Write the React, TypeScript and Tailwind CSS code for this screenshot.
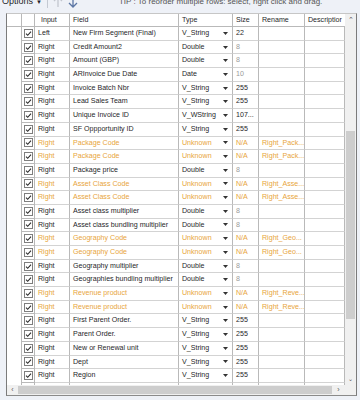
import { memo } from 'react';

type Row = {
  input: string;
  field: string;
  type: string;
  size: string;
  rename?: string;
  warn?: boolean;
  fixed?: boolean;
};

const rows: Row[] = [
  { input: 'Left', field: 'New Firm Segment (Final)', type: 'V_String', size: '22' },
  { input: 'Right', field: 'Credit Amount2', type: 'Double', size: '8', fixed: true },
  { input: 'Right', field: 'Amount (GBP)', type: 'Double', size: '8', fixed: true },
  { input: 'Right', field: 'ARInvoice Due Date', type: 'Date', size: '10', fixed: true },
  { input: 'Right', field: 'Invoice Batch Nbr', type: 'V_String', size: '255' },
  { input: 'Right', field: 'Lead Sales Team', type: 'V_String', size: '255' },
  { input: 'Right', field: 'Unique Invoice ID', type: 'V_WString', size: '107...' },
  { input: 'Right', field: 'SF Oppportunity ID', type: 'V_String', size: '255' },
  { input: 'Right', field: 'Package Code', type: 'Unknown', size: 'N/A', rename: 'Right_Pack...', warn: true },
  { input: 'Right', field: 'Package Code', type: 'Unknown', size: 'N/A', rename: 'Right_Pack...', warn: true },
  { input: 'Right', field: 'Package price', type: 'Double', size: '8', fixed: true },
  { input: 'Right', field: 'Asset Class Code', type: 'Unknown', size: 'N/A', rename: 'Right_Asse...', warn: true },
  { input: 'Right', field: 'Asset Class Code', type: 'Unknown', size: 'N/A', rename: 'Right_Asse...', warn: true },
  { input: 'Right', field: 'Asset class multiplier', type: 'Double', size: '8', fixed: true },
  { input: 'Right', field: 'Asset class bundling multiplier', type: 'Double', size: '8', fixed: true },
  { input: 'Right', field: 'Geography Code', type: 'Unknown', size: 'N/A', rename: 'Right_Geo...', warn: true },
  { input: 'Right', field: 'Geography Code', type: 'Unknown', size: 'N/A', rename: 'Right_Geo...', warn: true },
  { input: 'Right', field: 'Geography multiplier', type: 'Double', size: '8', fixed: true },
  { input: 'Right', field: 'Geographies bundling multiplier', type: 'Double', size: '8', fixed: true },
  { input: 'Right', field: 'Revenue product', type: 'Unknown', size: 'N/A', rename: 'Right_Reve...', warn: true },
  { input: 'Right', field: 'Revenue product', type: 'Unknown', size: 'N/A', rename: 'Right_Reve...', warn: true },
  { input: 'Right', field: 'First Parent Order.', type: 'V_String', size: '255' },
  { input: 'Right', field: 'Parent Order.', type: 'V_String', size: '255' },
  { input: 'Right', field: 'New or Renewal unit', type: 'V_String', size: '255' },
  { input: 'Right', field: 'Dept', type: 'V_String', size: '255' },
  { input: 'Right', field: 'Region', type: 'V_String', size: '255' },
  // only a sliver of the next row shows below the last one
  { input: '', field: '', type: '', size: '' },
];

const CheckBox = () => (
  <svg width="9" height="9" viewBox="0 0 9 9">
    <rect x="0.5" y="0.5" width="8" height="8" fill="#fff" stroke="#7e7e7e" />
    <path d="M2 4.6 L3.7 6.3 L7 2.6" fill="none" stroke="#2b2b2b" strokeWidth="1.1" />
  </svg>
);

const DropArrow = () => (
  <svg width="5" height="3" viewBox="0 0 5 3">
    <path d="M0 0 H5 L2.5 3 Z" fill="#333" />
  </svg>
);

const cell = 'h-full flex items-center overflow-hidden whitespace-nowrap border-r border-[#b9b9b9] px-[3px]';

const GridRow = memo(({ row }: { row: Row }) => {
  const color = row.warn ? 'text-[#e8a53c]' : 'text-[#1f1f2a]';
  return (
    <div className={`flex h-[13.7px] ${color}`}>
      <div className="w-[15px] h-full border-r border-[#b9b9b9] bg-white" />
      <div className="w-[13px] h-full flex items-center justify-center border-r border-b border-[#b9b9b9]">
        <CheckBox />
      </div>
      <div className={`w-[35px] border-b border-b-[#d3d3d3] ${cell}`}>{row.input}</div>
      <div className={`w-[109px] border-b border-b-[#d3d3d3] ${cell} pr-0`}>{row.field}</div>
      <div className={`w-[54px] justify-between border-b border-b-[#d3d3d3] ${cell}`}>
        <span>{row.type}</span>
        <span className="mr-[1px] flex items-center"><DropArrow /></span>
      </div>
      <div className={`w-[26px] border-b border-b-[#d3d3d3] ${cell} ${row.fixed ? 'text-[#9a9a9a]' : ''}`}>{row.size}</div>
      <div className={`w-[46px] border-b border-b-[#d3d3d3] ${cell} pr-0`}>{row.rename ?? ''}</div>
      <div className={`w-[40px] border-b border-b-[#d3d3d3] ${cell}`} />
    </div>
  );
});
GridRow.displayName = 'GridRow';

export default function App() {
  return (
    <div className="w-[360px] h-[400px] overflow-hidden bg-[#eef1f7] text-[#1f1f2a]" style={{ fontFamily: '"Liberation Sans", Arial, sans-serif' }}>
      {/* toolbar, cut off at the top */}
      <div className="h-[13px] flex items-start overflow-hidden">
        <div className="flex items-center -mt-[5px] h-[14px]">
          <span className="ml-[2px] text-[9px]">Options</span>
          <span className="ml-[3px] text-[6px]">▼</span>
          <span className="ml-[5px] w-px h-[12px] bg-[#c4c9d2]" />
          <svg className="ml-[5px]" width="10" height="12" viewBox="0 0 10 12">
            <path d="M5 11 V1 M1 5 L5 1 L9 5" fill="none" stroke="#c3c7cf" strokeWidth="1.3" />
          </svg>
          <svg className="ml-[5px]" width="10" height="12" viewBox="0 0 10 12">
            <path d="M5 1 V11 M1 7 L5 11 L9 7" fill="none" stroke="#5b76a4" strokeWidth="1.3" />
          </svg>
          <span className="ml-[41px] text-[8px] text-[#555]">TIP : To reorder multiple rows: select, right click and drag.</span>
        </div>
      </div>

      {/* grid */}
      <div className="ml-[6px] w-[351px] h-[383px] border-x border-x-[#7b7b7b] border-t border-t-[#c6c6c6] border-b border-b-[#8a8a8a] bg-white flex flex-col text-[7.1px]">
        <div className="flex flex-1 min-h-0">
          <div className="w-[338px] flex flex-col overflow-hidden">
            <div className="flex h-[13px] border-b border-[#b9b9b9] shrink-0">
              <div className="w-[15px] h-full border-r border-[#b9b9b9]" />
              <div className="w-[13px] h-full border-r border-[#b9b9b9]" />
              <div className={`w-[35px] ${cell} pl-[6px]`}>Input</div>
              <div className={`w-[109px] ${cell}`}>Field</div>
              <div className={`w-[54px] ${cell}`}>Type</div>
              <div className={`w-[26px] ${cell}`}>Size</div>
              <div className={`w-[46px] ${cell}`}>Rename</div>
              <div className={`w-[40px] ${cell} border-r-0 pr-0`}>Descriptior</div>
            </div>
            <div className="flex-1 overflow-hidden">
              {rows.map((r, i) => <GridRow key={i} row={r} />)}
            </div>
          </div>
          {/* vertical scrollbar */}
          <div className="w-[11px] bg-[#f0f0f0] flex flex-col items-center">
            <span className="h-[12px] flex items-center text-[7px] text-[#555]">⌃</span>
            <div className="h-[105px]" />
            <div className="w-[9px] h-[188px] bg-[#cdcdcd]" />
            <div className="flex-1" />
            <span className="h-[12px] flex items-center text-[6px] text-[#555]">⌄</span>
          </div>
        </div>
        {/* horizontal scrollbar */}
        <div className="h-[10px] flex items-center bg-[#f0f0f0] shrink-0">
          <span className="w-[11px] text-center text-[7px] text-[#555]">‹</span>
          <div className="w-[314px] h-[8px] bg-[#cdcdcd]" />
          <span className="w-[13px] text-center text-[7px] text-[#555]">›</span>
          <div className="w-[11px] h-full bg-[#f0f0f0]" />
        </div>
      </div>
    </div>
  );
}
